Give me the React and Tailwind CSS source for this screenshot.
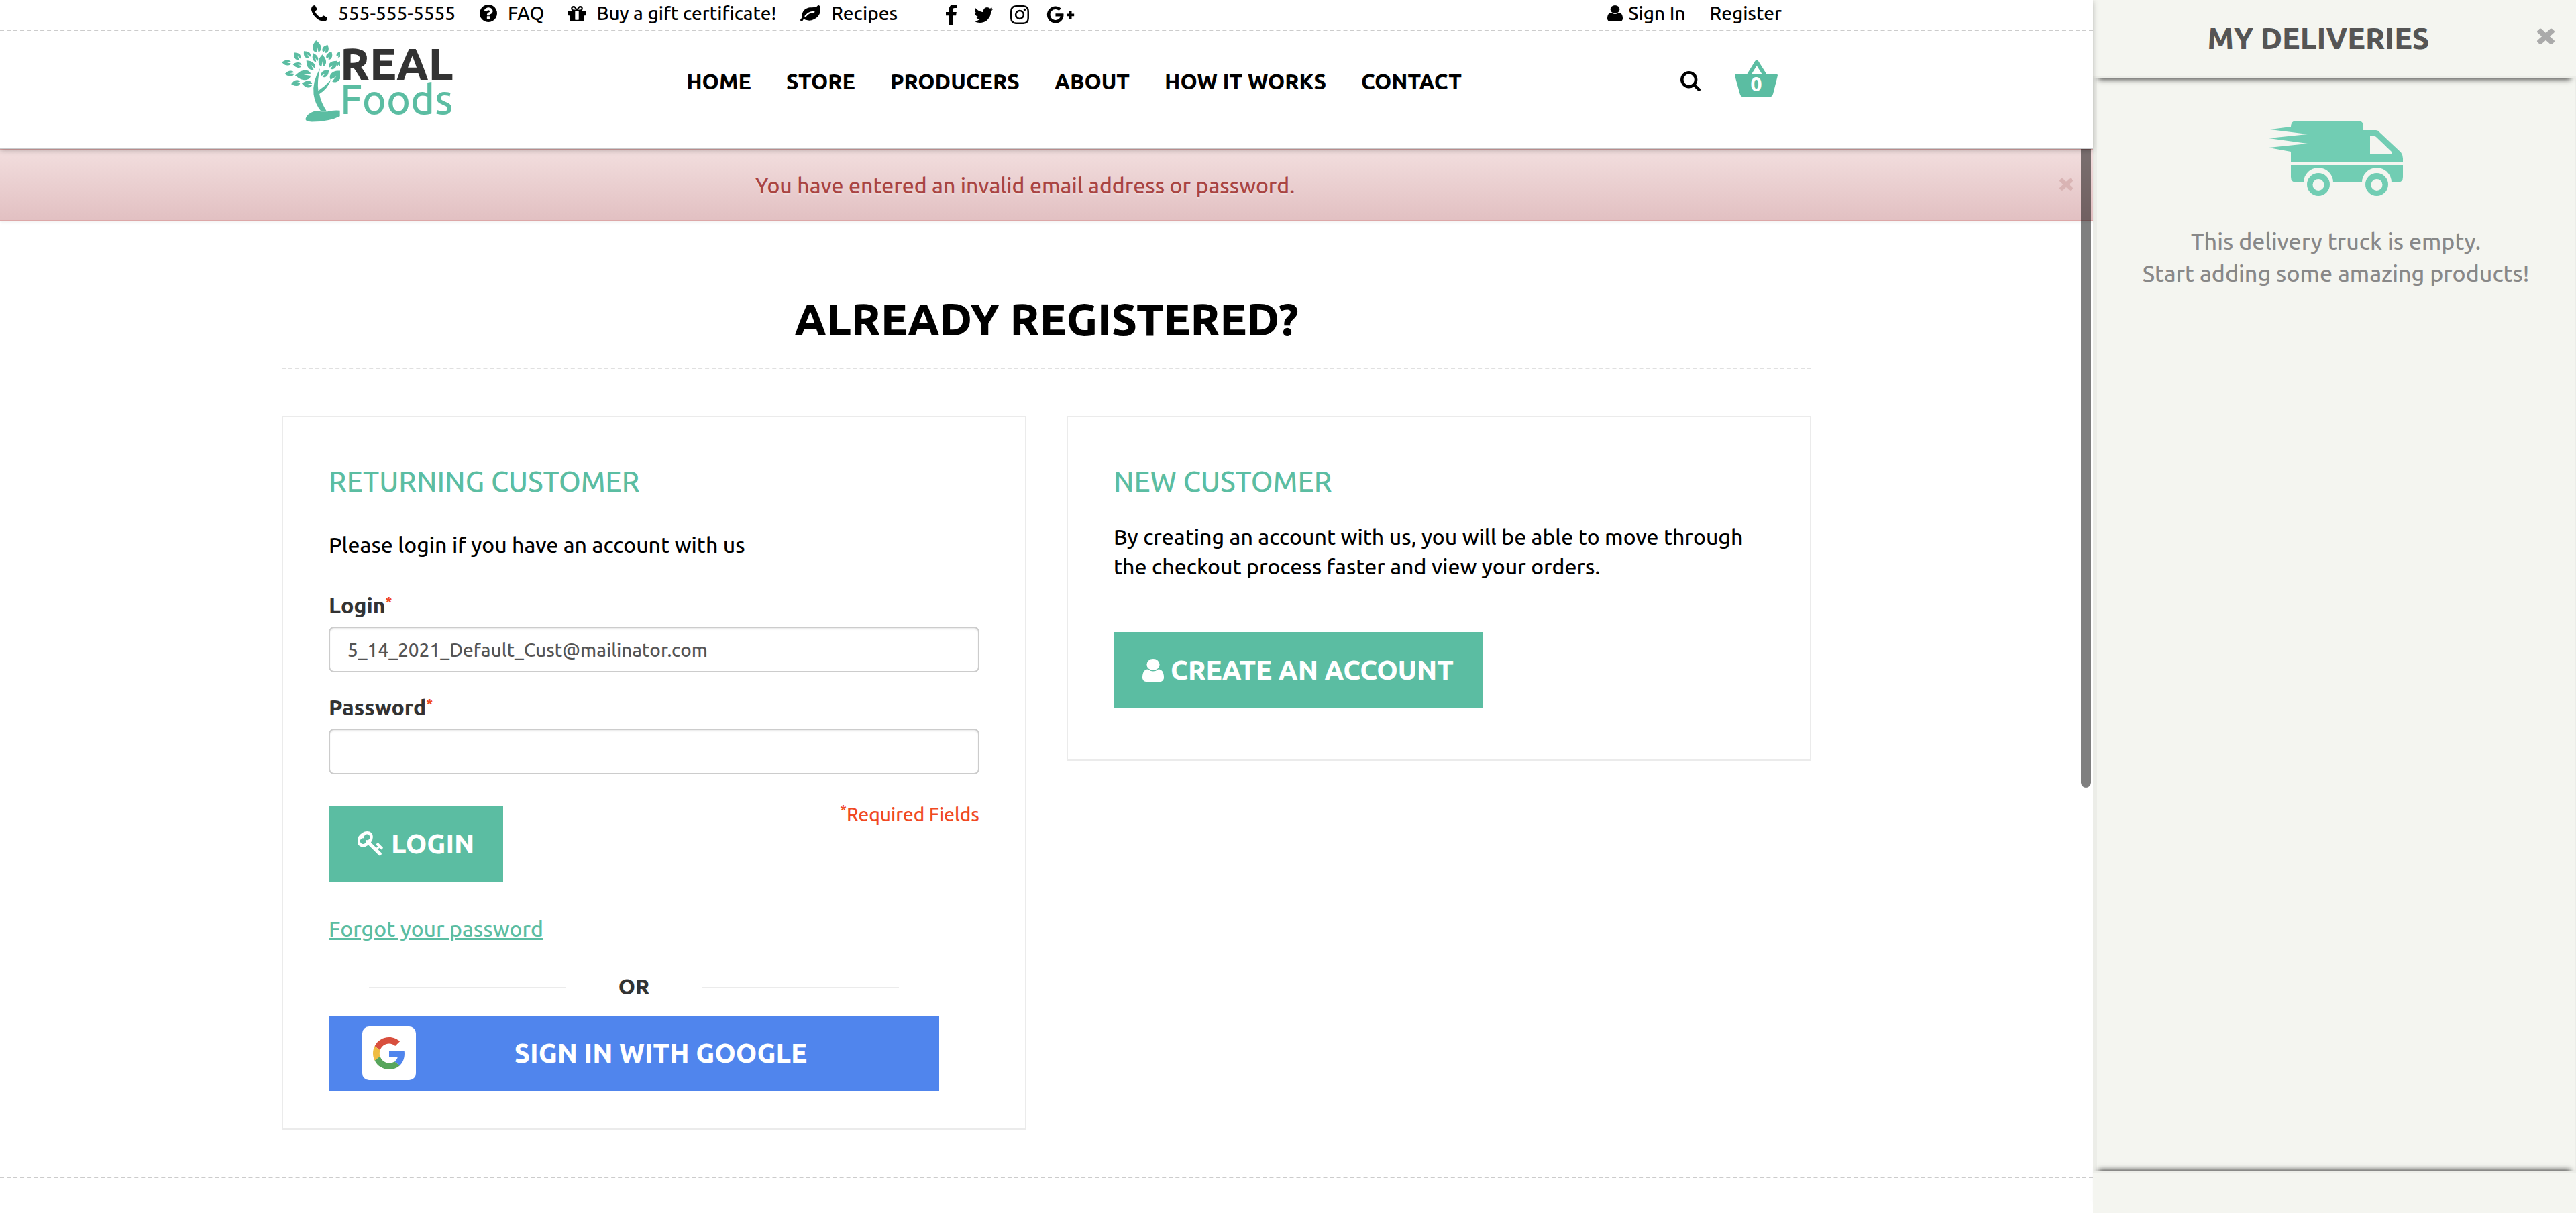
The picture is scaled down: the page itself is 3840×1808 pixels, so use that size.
import React from 'react';
import { FaGooglePlusG } from 'react-icons/fa';

const paths = {
  phone: 'M1600 1240q0 27-10 70.5t-21 68.5q-21 50-122 106-94 51-186 51-27 0-53-3.5t-57.5-12.5-47-14.5-55.5-20.5-49-18q-98-35-175-83-127-79-264-216t-216-264q-48-77-83-175-3-9-18-49t-20.5-55.5-14.5-47-12.5-57.5-3.5-53q0-92 51-186 56-101 106-122 25-11 68.5-21t70.5-10q14 0 21 3 18 6 53 76 11 19 30 54t35 63.5 31 53.5q3 4 17.5 25t21.5 35.5 7 28.5q0 20-28.5 50t-62 55-62 53-28.5 46q0 9 5 22.5t8.5 20.5 14 24 11.5 19q76 137 174 235t235 174q2 1 19 11.5t24 14 20.5 8.5 22.5 5q18 0 46-28.5t53-62 55-62 50-28.5q14 0 28.5 7t35.5 21.5 25 17.5q25 15 53.5 31t63.5 35 54 30q70 35 76 53 3 7 3 21z',
  user: 'M1536 1399q0 109-62.5 187t-150.5 78h-854q-88 0-150.5-78t-62.5-187q0-85 8.5-160.5t31.5-152 58.5-131 94-89 134.5-34.5q131 128 313 128t313-128q76 0 134.5 34.5t94 89 58.5 131 31.5 152 8.5 160.5zm-256-887q0 159-112.5 271.5t-271.5 112.5-271.5-112.5-112.5-271.5 112.5-271.5 271.5-112.5 271.5 112.5 112.5 271.5z',
  search: 'M1216 832q0-185-131.5-316.5t-316.5-131.5-316.5 131.5-131.5 316.5 131.5 316.5 316.5 131.5 316.5-131.5 131.5-316.5zm512 832q0 52-38 90t-90 38q-54 0-90-38l-343-342q-179 124-399 124-143 0-273.5-55.5t-225-150-150-225-55.5-273.5 55.5-273.5 150-225 225-150 273.5-55.5 273.5 55.5 225 150 150 225 55.5 273.5q0 220-124 399l343 343q37 37 37 90z',
  facebook: 'M1343 12v264h-157q-86 0-116 36t-30 108v189h293l-39 296h-254v759h-306v-759h-255v-296h255v-218q0-186 104-288.5t277-102.5q147 0 228 12z',
  twitter: 'M1684 408q-67 98-162 167 1 14 1 42 0 130-38 259.5t-115.5 248.5-184.5 210.5-258 146-323 54.5q-271 0-496-145 35 4 78 4 225 0 401-138-105-2-188-64.5t-114-159.5q33 5 61 5 43 0 85-11-112-23-185.5-111.5t-73.5-205.5v-4q68 38 146 41-66-44-105-115t-39-154q0-88 44-163 121 149 294.5 238.5t371.5 99.5q-8-38-8-74 0-134 94.5-228.5t228.5-94.5q140 0 236 102 109-21 205-78-37 115-142 178 93-10 186-50z',
  question: 'M1024 1376v-192q0-14-9-23t-23-9h-192q-14 0-23 9t-9 23v192q0 14 9 23t23 9h192q14 0 23-9t9-23zm256-672q0-88-55.5-163t-138.5-116-170-41q-243 0-371 213-15 24 8 42l132 100q7 6 19 6 16 0 25-12 53-68 86-92 34-24 86-24 48 0 85.5 26t37.5 59q0 38-20 61t-68 45q-63 28-115.5 86.5t-52.5 125.5v36q0 14 9 23t23 9h192q14 0 23-9t9-23q0-19 21.5-49.5t54.5-49.5q32-18 49-28.5t46-35 44.5-48 28-60.5 12.5-81zm384 192q0 209-103 385.5t-279.5 279.5-385.5 103-385.5-103-279.5-279.5-103-385.5 103-385.5 279.5-279.5 385.5-103 385.5 103 279.5 279.5 103 385.5z',
  gift: 'M1056 1356v-716h-320v716q0 25 18 38.5t46 13.5h192q28 0 46-13.5t18-38.5zm-456-844h195l-126-161q-26-31-69-31-40 0-68 28t-28 68 28 68 68 28zm688-96q0-40-28-68t-68-28q-43 0-69 31l-125 161h194q40 0 68-28t28-68zm376 256v320q0 14-9 23t-23 9h-96v416q0 40-28 68t-68 28h-1088q-40 0-68-28t-28-68v-416h-96q-14 0-23-9t-9-23v-320q0-14 9-23t23-9h440q-93 0-158.5-65.5t-65.5-158.5 65.5-158.5 158.5-65.5q107 0 168 77l128 165 128-165q61-77 168-77 93 0 158.5 65.5t65.5 158.5-65.5 158.5-158.5 65.5h440q14 0 23 9t9 23z',
  leaf: 'M1280 704q0-26-19-45t-45-19q-172 0-318 49.5t-259.5 134-235.5 219.5q-19 21-19 45 0 26 19 45t45 19q24 0 45-19 27-24 74-71t67-66q137-124 268.5-176t313.5-52q26 0 45-19t19-45zm512-198q0 95-20 193-46 224-184.5 383t-357.5 268q-214 108-438 108-148 0-286-47-15-5-88-42t-96-37q-16 0-39.5 32t-45 70-52.5 70-60 32q-43 0-63.5-17.5t-45.5-59.5q-2-4-6-11t-5.5-10-3-9.5-1.5-13.5q0-35 31-73.5t68-65.5 68-56 31-48q0-4-14-38t-16-44q-9-51-9-104 0-115 43.5-220t119-184.5 170.5-139 204-95.5q55-18 145-25.5t179.5-9 178.5-6 163.5-24 113.5-56.5l29.5-29.5 29.5-28 27-20 36.5-16 43.5-4.5q39 0 70.5 46t47.5 112 24 124 8 96z',
  instagram: 'M1152 896q0-106-75-181t-181-75-181 75-75 181 75 181 181 75 181-75 75-181zm138 0q0 164-115 279t-279 115-279-115-115-279 115-279 279-115 279 115 115 279zm108-410q0 38-27 65t-65 27-65-27-27-65 27-65 65-27 65 27 27 65zm-502-220q-7 0-76.5-.5t-105.5 0-96.5 3-103 10-71.5 18.5q-50 20-88 58t-58 88q-11 29-18.5 71.5t-10 103-3 96.5 0 105.5.5 76.5-.5 76.5 0 105.5 3 96.5 10 103 18.5 71.5q20 50 58 88t88 58q29 11 71.5 18.5t103 10 96.5 3 105.5 0 76.5-.5 76.5.5 105.5 0 96.5-3 103-10 71.5-18.5q50-20 88-58t58-88q11-29 18.5-71.5t10-103 3-96.5 0-105.5-.5-76.5.5-76.5 0-105.5-3-96.5-10-103-18.5-71.5q-20-50-58-88t-88-58q-29-11-71.5-18.5t-103-10-96.5-3-105.5 0-76.5.5zm768 630q0 229-5 317-10 208-124 322t-322 124q-88 5-317 5t-317-5q-208-10-322-124t-124-322q-5-88-5-317t5-317q10-208 124-322t322-124q88-5 317-5t317 5q208 10 322 124t124 322q5 88 5 317z',
  close: 'M1490 1322q0 40-28 68l-136 136q-28 28-68 28t-68-28l-294-294-294 294q-28 28-68 28t-68-28l-136-136q-28-28-28-68t28-68l294-294-294-294q-28-28-28-68t28-68l136-136q28-28 68-28t68 28l294 294 294-294q28-28 68-28t68 28l136 136q28 28 28 68t-28 68l-294 294 294 294q28 28 28 68z',
  key: 'M832 512q0-80-56-136t-136-56-136 56-56 136q0 42 19 83-41-19-83-19-80 0-136 56t-56 136 56 136 136 56 136-56 56-136q0-42-19-83 41 19 83 19 80 0 136-56t56-136zm851 704q0 17-49 66t-66 49q-9 0-28.5-16t-36.5-33-38.5-40-24.5-26l-96 96 220 220q28 28 28 68 0 42-39 81t-81 39q-40 0-68-28l-671-671q-176 131-365 131-163 0-265.5-102.5t-102.5-265.5q0-160 95-313t248-248 313-95q163 0 265.5 102.5t102.5 265.5q0 189-131 365l355 355 96-96q-3-3-26-24.5t-40-38.5-33-36.5-16-28.5q0-17 49-66t66-49q13 0 23 10 6 6 46 44.5t82 79.5 86.5 86 73 78 28.5 41z',
};

function Icon({ name, box, className }) {
  return (
    <svg viewBox={box} preserveAspectRatio="none" className={className} fill="currentColor" aria-hidden="true">
      <path d={paths[name]} />
    </svg>
  );
}

// x, y, length, width, rotation of the tip (0 = up)
const leaves = [
  [187, 84, 54, 38, -6], [228, 95, 38, 28, 25], [98, 127, 38, 28, -38], [142, 120, 38, 28, -42],
  [179, 134, 40, 24, -22], [212, 148, 54, 34, 0], [245, 125, 38, 26, 28], [51, 158, 42, 24, -86],
  [99, 168, 40, 24, -82], [158, 167, 52, 32, -42], [262, 166, 46, 32, 45], [288, 120, 30, 20, 32],
  [289, 162, 26, 20, 30], [64, 207, 42, 25, -95], [125, 214, 70, 44, -92], [92, 250, 40, 26, -100],
  [143, 254, 46, 30, -84], [226, 205, 42, 28, 48], [276, 216, 64, 46, 48],
];

function Tree() {
  return (
    <svg viewBox="30 58 262 366" className="h-[122px] w-[87px] shrink-0 text-[#5bbda2]" fill="currentColor" aria-hidden="true">
      {leaves.map(([x, y, l, w, r]) => (
        <path
          key={x + '-' + y}
          transform={`translate(${x} ${y}) rotate(${r}) scale(${w / 2} ${l / 2})`}
          d="M0-1C.35-.7 1-.35 1 .25C1 .7.6.95.25 1L.1 .1L-.2 1C-.6 .95-1 .7-1 .25C-1-.35-.35-.7 0-1Z"
        />
      ))}
      <path d="M202 183Q166 245 173 300Q179 345 208 378L233 378Q205 335 199 298Q236 276 251 234Q226 262 194 284Q188 240 202 183Z" />
      <path d="M137 410Q142 388 172 377Q190 372 208 378L232 378Q262 370 291 373V398Q245 422 165 423Q135 423 137 410Z" />
    </svg>
  );
}

function Truck() {
  return (
    <svg viewBox="0 0 200 112" className="h-[112px] w-[200px] text-[#71cdb3]" fill="currentColor" aria-hidden="true">
      <path
        fillRule="evenodd"
        d="M33 9Q33 0 41 0H133Q141 0 141 8V14H160Q163 14 165 17L197 47Q200 51 200 56V61H33V46L0 40L58 34L0 26L58 20L2 13ZM151 23V49H183Q185 48 183 46L160 24Q159 23 157 23Z"
      />
      <path d="M33 66H200V84Q200 92 192 92H183A22 22 0 0 0 139 92H96A22 22 0 0 0 52 92H41Q33 92 33 84Z" />
      <path fillRule="evenodd" d="M74 78a17 17 0 1 0 0 34a17 17 0 1 0 0-34ZM74 87a8 8 0 1 1 0 17a8 8 0 1 1 0-17Z" />
      <path fillRule="evenodd" d="M161 78a17 17 0 1 0 0 34a17 17 0 1 0 0-34ZM161 87a8 8 0 1 1 0 17a8 8 0 1 1 0-17Z" />
    </svg>
  );
}

function GoogleG() {
  return (
    <svg viewBox="0 0 48 48" className="size-12" aria-hidden="true">
      <path fill="#d84f3e" d="M24 9.5c3.54 0 6.71 1.22 9.21 3.6l6.85-6.85C35.9 2.38 30.47 0 24 0 14.62 0 6.51 5.38 2.56 13.22l7.98 6.19C12.43 13.72 17.74 9.5 24 9.5z" />
      <path fill="#5085ed" d="M46.98 24.55c0-1.57-.15-3.09-.38-4.55H24v9.02h12.94c-.58 2.96-2.26 5.48-4.78 7.18l7.73 6c4.51-4.18 7.09-10.36 7.09-17.65z" />
      <path fill="#efbc42" d="M10.53 28.59c-.48-1.45-.76-2.99-.76-4.59s.27-3.14.76-4.59l-7.98-6.19C.92 16.46 0 20.12 0 24c0 3.88.92 7.54 2.56 10.78l7.97-6.19z" />
      <path fill="#57a55c" d="M24 48c6.48 0 11.93-2.13 15.89-5.81l-7.73-6c-2.15 1.45-4.92 2.3-8.16 2.3-6.26 0-11.57-4.22-13.47-9.91l-7.98 6.19C6.51 42.62 14.62 48 24 48z" />
    </svg>
  );
}

function TopBar() {
  return (
    <div className="border-b-2 border-dashed border-[#cccccc]">
      <div className="mx-auto flex h-11 max-w-[2280px] justify-between px-11 pb-1 text-[28px] leading-10">
        <div className="flex items-center">
          <a href="#phone" className="flex items-center gap-4"><Icon name="phone" box="192 128 1408 1408" className="h-6 w-6" />555-555-5555</a>
          <a href="#faq" className="ml-9 flex items-center gap-4"><Icon name="question" box="128 128 1536 1536" className="h-[26px] w-[26px]" />FAQ</a>
          <a href="#gift" className="ml-9 flex items-center gap-4"><Icon name="gift" box="128 192 1536 1344" className="h-[23px] w-[26px]" />Buy a gift certificate!</a>
          <a href="#recipes" className="ml-9 flex items-center gap-4"><Icon name="leaf" box="0 128 1792 1408" className="h-6 w-[30px]" />Recipes</a>
          <div className="ml-[72px] flex items-center gap-[26px] pt-1">
            <a href="#facebook" aria-label="Facebook"><Icon name="facebook" box="479 0 864 1664" className="h-[30px] w-4" /></a>
            <a href="#twitter" aria-label="Twitter"><Icon name="twitter" box="108 256 1576 1280" className="h-[23px] w-7" /></a>
            <a href="#instagram" aria-label="Instagram"><Icon name="instagram" box="128 128 1536 1536" className="size-7" /></a>
            <a href="#googleplus" aria-label="Google Plus"><FaGooglePlusG className="h-[34px] w-[42px]" /></a>
          </div>
        </div>
        <div className="flex items-center gap-9">
          <a href="#signin" className="flex items-center gap-2"><Icon name="user" box="256 128 1280 1536" className="h-6 w-[23px]" />Sign In</a>
          <a href="#register">Register</a>
        </div>
      </div>
    </div>
  );
}

const nav = ['HOME', 'STORE', 'PRODUCERS', 'ABOUT', 'HOW IT WORKS', 'CONTACT'];

function Header() {
  return (
    <header className="relative z-10 border-b-2 border-[#c9cacc] bg-white shadow-[0_2px_8px_rgba(0,0,0,0.25)]">
      <TopBar />
      <div className="mx-auto flex h-[174px] max-w-[2280px] items-center justify-between pr-[50px] pb-6">
        <a href="#home" className="flex w-[277px] items-center">
          <Tree />
          <span className="block leading-[54px]">
            <span className="block text-[66px] font-extrabold text-[#333333]">REAL</span>
            <span className="block text-[61px] text-[#5bbda2]">Foods</span>
          </span>
        </a>
        <nav className="flex gap-[52px] text-[32px] font-extrabold">
          {nav.map((n) => <a key={n} href={'#' + n.toLowerCase().replace(/ /g, '-')}>{n}</a>)}
        </nav>
        <div className="flex items-center gap-[51px]">
          <button type="button" aria-label="Search"><Icon name="search" box="64 128 1664 1664" className="size-[30px]" /></button>
          <button type="button" aria-label="Cart" className="relative mb-2 flex h-14 w-16 items-end justify-center">
            <svg viewBox="320 56 190 166" className="absolute inset-0 size-full text-[#5bbda2]" aria-hidden="true">
              <path d="M320 126Q320 119 327 119H503Q510 119 510 126L490 205Q486 222 470 222H362Q346 222 342 205Z" fill="currentColor" />
              <path d="M381 125L417 66L454 125" fill="none" stroke="currentColor" strokeWidth="17" strokeLinejoin="round" />
            </svg>
            <span className="relative text-[30px] leading-10 font-extrabold text-white">0</span>
          </button>
        </div>
      </div>
    </header>
  );
}

const heading = 'text-[42px] leading-[56px] text-[#5bbda2]';
const label = 'block text-[32px] leading-[44px] font-extrabold text-[#333333]';
const input = 'mt-[10px] block h-[68px] w-full rounded-lg border-2 border-[#cccccc] bg-white px-[26px] text-[28px] text-[#555555] shadow-[inset_0_2px_2px_rgba(0,0,0,0.075)]';

function ReturningCustomer() {
  return (
    <section className="flex-1 border-2 border-[#ebebeb] px-[68px] pt-[68px] pb-14">
      <h2 className={heading}>RETURNING CUSTOMER</h2>
      <p className="mt-11 text-[32px] leading-[44px]">Please login if you have an account with us</p>
      <form onSubmit={(e) => e.preventDefault()}>
        <label htmlFor="login" className={label + ' mt-[46px]'}>Login<sup className="text-[20px] text-[#f04923]">*</sup></label>
        <input id="login" type="text" className={input} defaultValue="5_14_2021_Default_Cust@mailinator.com" />
        <label htmlFor="password" className={label + ' mt-[30px]'}>Password<sup className="text-[20px] text-[#f04923]">*</sup></label>
        <input id="password" type="password" className={input} />
        <div className="mt-10 flex items-start justify-between">
          <button type="submit" className="mt-2 flex h-28 items-center gap-3 bg-[#5bbda2] px-[43px] text-[40px] font-extrabold text-white">
            <Icon name="key" box="27 128 1656 1664" className="size-[38px]" />LOGIN
          </button>
          <p className="text-[28px] leading-10 text-[#f04923]"><sup className="text-[20px]">*</sup>Required Fields</p>
        </div>
      </form>
      <p className="mt-12 text-[32px] leading-[44px]">
        <a href="#forgot" className="text-[#5bbda2] underline">Forgot your password</a>
      </p>
      <div className="mt-[42px] mr-[60px]">
        <div className="flex items-center gap-[78px] px-[60px] text-[32px] leading-[44px] font-extrabold text-[#333333]">
          <span className="mt-1 h-[2px] flex-1 bg-[#ebebeb]" />OR<span className="mt-1 h-[2px] flex-1 bg-[#ebebeb]" />
        </div>
        <button type="button" className="mt-[22px] flex h-28 w-full items-center bg-[#5085ed] px-[50px] text-[40px] font-extrabold text-white">
          <span className="flex size-20 items-center justify-center rounded-[10px] bg-white"><GoogleG /></span>
          <span className="flex-1">SIGN IN WITH GOOGLE</span>
        </button>
      </div>
    </section>
  );
}

function NewCustomer() {
  return (
    <section className="flex-1 border-2 border-[#ebebeb] px-[68px] pt-[68px] pb-[76px]">
      <h2 className={heading}>NEW CUSTOMER</h2>
      <p className="mt-8 text-[32px] leading-[44px]">By creating an account with us, you will be able to move through the checkout process faster and view your orders.</p>
      <button type="button" className="mt-[76px] flex h-[114px] items-center gap-[10px] bg-[#5bbda2] px-[43px] text-[40px] font-extrabold text-white">
        <Icon name="user" box="256 128 1280 1536" className="h-[34px] w-8" />CREATE AN ACCOUNT
      </button>
    </section>
  );
}

function Deliveries() {
  return (
    <aside className="flex min-h-screen w-[720px] shrink-0 flex-col bg-[#f4f5f0]">
      <div className="relative flex h-[116px] items-center border-b-2 border-[#ecede8] bg-[#f4f5f0] pl-[10px] shadow-[0_10px_8px_-8px_rgba(0,0,0,0.8)]">
        <h2 className="flex-1 text-center text-[44px] leading-[54px] font-extrabold text-[#555555]">MY DELIVERIES</h2>
        <button type="button" aria-label="Close" className="w-[58px] pb-2 text-[#aaaaaa]"><Icon name="close" box="302 238 1188 1316" className="size-[26px]" /></button>
      </div>
      <div className="flex-1 border-r-2 border-l-[6px] border-[#ecede8] pt-16 text-center text-[34px] leading-[48px] text-[#888888]">
        <div className="flex justify-center"><Truck /></div>
        <p className="mt-[43px]">This delivery truck is empty.<br />Start adding some amazing products!</p>
      </div>
      <div className="relative h-[62px] border-t-2 border-[#ecede8] bg-[#f4f5f0] shadow-[0_-10px_8px_-8px_rgba(0,0,0,0.8)]" />
    </aside>
  );
}

export default function App() {
  return (
    <div className="flex min-h-screen bg-white font-[Ubuntu,'Noto_Sans',sans-serif] font-medium text-black">
      <div className="relative min-w-0 flex-1">
        <Header />
        <div role="alert" className="flex h-[108px] items-center border-y-2 border-[#dca7a7] bg-linear-to-b from-[#f2dede] to-[#e2c0c2] pr-[30px] pl-8 text-[32px] text-[#a94442] shadow-[0_2px_4px_rgba(0,0,0,0.05)]">
          <p className="flex-1 text-center text-shadow-[0_2px_0_rgba(255,255,255,0.3)]">You have entered an invalid email address or password.</p>
          <button type="button" aria-label="Dismiss" className="flex w-[66px] justify-end pb-1 text-[#d9b4b4]">
            <Icon name="close" box="302 238 1188 1316" className="size-5" />
          </button>
        </div>
        <div className="absolute top-[222px] right-[3px] z-20 h-[952px] w-[15px] rounded-b-full bg-black/50" />
        <main className="mx-auto max-w-[2280px]">
          <h1 className="mt-[107px] border-b-2 border-dashed border-[#e0e0e0] pb-[35px] text-center text-[66px] leading-[76px] font-extrabold">ALREADY REGISTERED?</h1>
          <div className="mt-[70px] flex items-start gap-[60px]">
            <ReturningCustomer />
            <NewCustomer />
          </div>
        </main>
        <div className="mt-[70px] border-t-2 border-dashed border-[#cccccc]" />
      </div>
      <Deliveries />
    </div>
  );
}
